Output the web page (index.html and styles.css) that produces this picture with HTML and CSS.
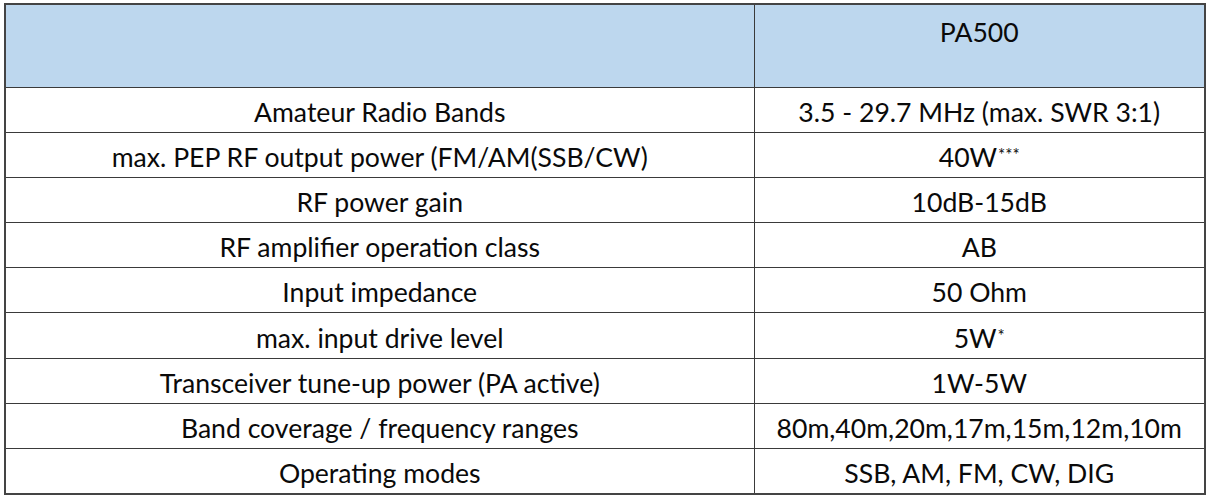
FILE: index.html
```html
<!DOCTYPE html>
<html>
<head>
<meta charset="utf-8">
<link rel="stylesheet" href="styles.css">
</head>
<body>
<table class="spec">
  <colgroup><col class="c1"><col class="c2"></colgroup>
  <tr class="head"><th></th><th>PA500</th></tr>
  <tr><td>Amateur Radio Bands</td><td>3.5 - 29.7 MHz (max. SWR 3:1)</td></tr>
  <tr><td>max. PEP RF output power (FM/AM(SSB/CW)</td><td>40W<sup>***</sup></td></tr>
  <tr><td>RF power gain</td><td>10dB-15dB</td></tr>
  <tr><td>RF amplifier operation class</td><td>AB</td></tr>
  <tr><td>Input impedance</td><td>50 Ohm</td></tr>
  <tr><td>max. input drive level</td><td>5W<sup>*</sup></td></tr>
  <tr><td>Transceiver tune-up power (PA active)</td><td>1W-5W</td></tr>
  <tr><td>Band coverage / frequency ranges</td><td>80m,40m,20m,17m,15m,12m,10m</td></tr>
  <tr><td>Operating modes</td><td>SSB, AM, FM, CW, DIG</td></tr>
</table>
</body>
</html>
```
FILE: styles.css
```css
html, body {
  margin: 0;
  padding: 0;
  background: #ffffff;
}
body {
  padding: 3px 0 0 4px;
  font-family: Lato, "Open Sans", sans-serif;
  color: #0a0a0a;
}
.spec {
  border-collapse: collapse;
  width: 1200px;
  table-layout: fixed;
  border: 2px solid #444;
}
.c1 { width: 749px; }
.c2 { width: 451px; }
.spec tr { height: 45.2px; }
.spec tr.head { height: 83px; }
.spec th, .spec td {
  border: 1px solid #3a3a3a;
  text-align: center;
  font-size: 26.6px;
  font-weight: normal;
  padding: 0;
  line-height: 28px;
}
.spec td {
  vertical-align: middle;
  padding-top: 4px;
}
.head th {
  background: #bdd7ee;
  vertical-align: top;
  padding-top: 13px;
}
sup {
  font-size: 17px;
  line-height: 0;
  vertical-align: 6px;
  margin-left: 1px;
}
```
